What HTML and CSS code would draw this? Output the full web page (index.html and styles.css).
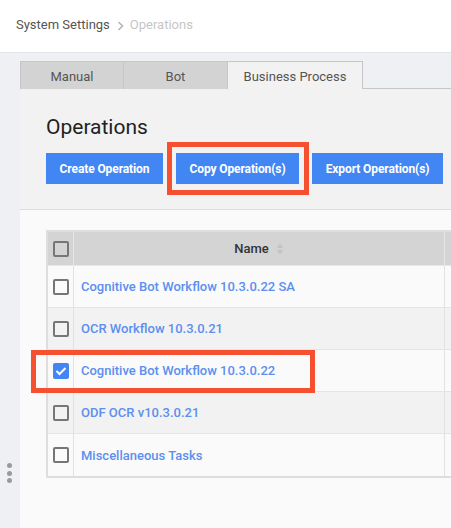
FILE: index.html
```html
<!DOCTYPE html>
<html lang="en">
<head>
<meta charset="utf-8">
<title>Operations</title>
<link rel="stylesheet" href="styles.css">
</head>
<body>
<header class="topbar">
  <nav class="crumbs">
    <span class="crumb">System Settings</span>
    <svg class="crumb-sep" width="7" height="10" viewBox="0 0 7 10"><path d="M1.5 1 L5.5 5 L1.5 9" fill="none" stroke="#b5b5b5" stroke-width="1.6"/></svg>
    <span class="crumb current">Operations</span>
  </nav>
</header>
<main class="main">
  <div class="handle"><i></i><i></i><i></i></div>
  <section class="panel">
    <div class="tabs">
      <div class="tab">Manual</div>
      <div class="tab">Bot</div>
      <div class="tab active">Business Process</div>
    </div>
    <div class="panel-head">
      <h1 class="title">Operations</h1>
      <div class="actions">
        <button class="btn">Create Operation</button>
        <button class="btn marked">Copy Operation(s)</button>
        <button class="btn">Export Operation(s)</button>
      </div>
    </div>
    <div class="panel-body">
      <div class="grid">
        <div class="row head">
          <div class="cell check"><span class="box"></span></div>
          <div class="cell name-h">Name
            <svg class="sort" width="8" height="12" viewBox="0 0 8 12"><path d="M4 0.5 L7.5 5 L0.5 5 Z" fill="#c4c4c4"/><path d="M4 11.5 L7.5 7 L0.5 7 Z" fill="#c4c4c4"/></svg>
          </div>
          <div class="cell"></div>
        </div>
        <div class="row">
          <div class="cell check"><span class="box"></span></div>
          <div class="cell name">Cognitive Bot Workflow 10.3.0.22 SA</div>
          <div class="cell"></div>
        </div>
        <div class="row alt">
          <div class="cell check"><span class="box"></span></div>
          <div class="cell name">OCR Workflow 10.3.0.21</div>
          <div class="cell"></div>
        </div>
        <div class="row marked-row">
          <div class="cell check"><span class="box checked"><svg width="12" height="10" viewBox="0 0 12 10"><path d="M1.5 5 L4.5 8 L10.5 2" fill="none" stroke="#fff" stroke-width="2"/></svg></span></div>
          <div class="cell name">Cognitive Bot Workflow 10.3.0.22</div>
          <div class="cell"></div>
        </div>
        <div class="row alt">
          <div class="cell check"><span class="box"></span></div>
          <div class="cell name">ODF OCR v10.3.0.21</div>
          <div class="cell"></div>
        </div>
        <div class="row">
          <div class="cell check"><span class="box"></span></div>
          <div class="cell name">Miscellaneous Tasks</div>
          <div class="cell"></div>
        </div>
      </div>
    </div>
  </section>
</main>
</body>
</html>
```
FILE: styles.css
```css
*, *::before, *::after { box-sizing: border-box; }
html, body { margin: 0; padding: 0; }
body {
  width: 451px;
  height: 528px;
  overflow: hidden;
  font-family: Roboto, "Liberation Sans", sans-serif;
  background: #eff0f3;
}
.topbar {
  height: 53px;
  background: #fff;
  border-bottom: 1px solid #e4e5e8;
  padding: 17px 16px 0;
}
.crumbs {
  display: flex;
  align-items: center;
  gap: 7px;
  font-size: 13px;
  line-height: 16px;
}
.crumb { color: #555; }
.crumb.current { color: #c6c6c6; margin-left: -1px; }
.crumb-sep { margin-top: 1px; }

.main {
  position: relative;
  padding: 8px 0 0 20px;
  height: 475px;
}
.handle {
  position: absolute;
  left: 7px;
  top: 410px;
  display: flex;
  flex-direction: column;
  gap: 2.5px;
}
.handle i {
  display: block;
  width: 5px;
  height: 5px;
  border-radius: 50%;
  background: #9a9a9a;
}
.panel {
  width: 431px;
  height: 100%;
  display: flex;
  flex-direction: column;
}
.tabs {
  display: flex;
  height: 28px;
  border-bottom: 1px solid #c6c6c6;
}
.tab {
  height: 28px;
  background: #d3d3d3;
  border: 1px solid #c6c6c6;
  border-bottom: none;
  border-right: none;
  color: #555;
  font-size: 13px;
  display: flex;
  align-items: center;
  justify-content: center;
  padding-top: 1px;
}
.tab:nth-child(1) { width: 103px; }
.tab:nth-child(2) { width: 104px; }
.tab.active {
  width: 136px;
  background: #f2f2f2;
  border-right: 1px solid #c6c6c6;
  height: 29px;
  margin-bottom: -1px;
}
.panel-head {
  background: #f2f2f2;
  padding: 26px 0 25px 26px;
  border-bottom: 1px solid #dddddd;
}
.title {
  margin: 0 0 14px;
  font-size: 21px;
  line-height: 24px;
  font-weight: 400;
  color: #222;
}
.actions {
  display: flex;
  gap: 13px;
}
.btn {
  position: relative;
  height: 31px;
  border: none;
  background: #4286f4;
  color: #fff;
  font-family: Roboto, "Liberation Sans", sans-serif;
  font-size: 12px;
  font-weight: 700;
  padding: 0;
  letter-spacing: -0.1px;
  flex: none;
}
.btn:nth-child(1) { width: 117px; }
.btn:nth-child(2) { width: 123px; }
.btn:nth-child(3) { width: 131px; }
.btn.marked::after {
  content: "";
  position: absolute;
  left: -9px;
  right: -10px;
  top: -11px;
  bottom: -11px;
  border: 5px solid #f5502f;
}
.panel-body {
  flex: 1;
  background: #fafafa;
  padding: 20px 0 0 26px;
}
.grid {
  border: 2px solid #dedede;
  border-right: none;
}
.row {
  position: relative;
  display: grid;
  grid-template-columns: 26px 371px 1fr;
  height: 42px;
  border-bottom: 1px solid #e4e4e4;
  background: #fafafa;
}
.row:last-child { border-bottom: none; }
.row.alt { background: #f2f2f2; }
.row.head {
  height: 34px;
  background: #d4d4d4;
  border-bottom: 1px solid #e8e8e8;
}
.cell {
  display: flex;
  align-items: center;
  border-right: 1px solid #e2e2e2;
}
.cell:last-child { border-right: none; }
.row.head .cell { border-right-color: #e6e6e6; }
.check { justify-content: center; }
.box {
  width: 16px;
  height: 16px;
  border: 2px solid #767676;
  border-radius: 2px;
  display: flex;
  align-items: center;
  justify-content: center;
}
.box.checked {
  background: #4286f4;
  border-color: #4286f4;
}
.name {
  padding-left: 7px;
  font-size: 13px;
  font-weight: 500;
  color: #5c8fef;
}
.name-h {
  justify-content: center;
  gap: 7px;
  font-size: 13px;
  font-weight: 500;
  color: #333;
}
.sort { margin-top: 1px; }
.marked-row { z-index: 2; }
.marked-row::after {
  content: "";
  position: absolute;
  left: -17px;
  top: 0;
  width: 284px;
  height: 43px;
  border: 5px solid #f5502f;
}
```
